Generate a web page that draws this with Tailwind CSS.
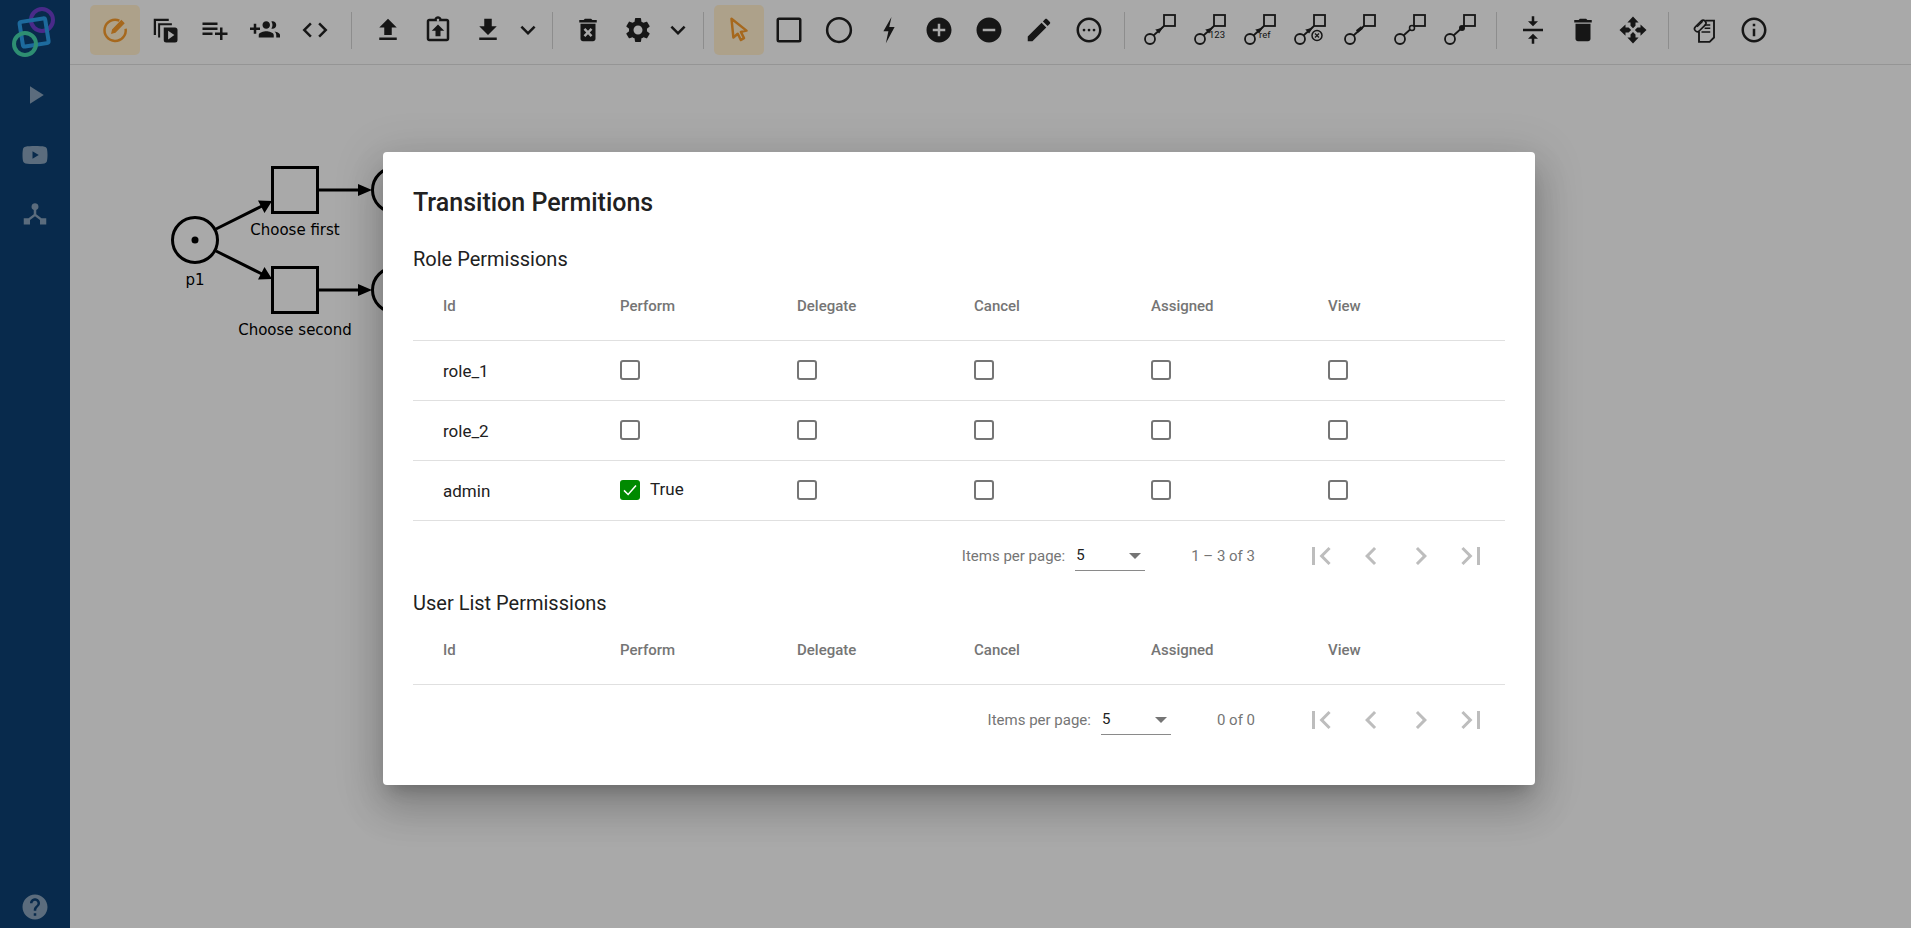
<!DOCTYPE html>
<html lang="en">
<head>
  <meta charset="UTF-8">
  <title>Transition Permitions</title>
  <script src="https://cdn.jsdelivr.net/npm/@tailwindcss/browser@4"></script>
</head>
<body class="bg-[#f9f9f9] font-['Roboto',sans-serif] overflow-hidden">
<div class="relative flex h-[928px] w-[1911px] overflow-hidden">

  <!-- Sidebar -->
  <aside class="flex w-[70px] flex-col items-center bg-[#0c3f70] text-white/50">
    <svg class="h-[70px] w-[70px] shrink-0" viewBox="0 0 70 70" fill="none">
      <circle cx="42" cy="20" r="11" stroke="#6d3ecb" stroke-width="4"/>
      <rect x="21" y="20" width="26" height="25" rx="2" transform="rotate(-9 34 32)" stroke="#2c9de8" stroke-width="4"/>
      <circle cx="25" cy="44" r="11" stroke="#45d2a8" stroke-width="4"/>
    </svg>
    <svg class="mt-[10px] h-[30px] w-[30px]" viewBox="0 0 24 24" fill="currentColor"><path d="M8 5v14l11-7z"/></svg>
    <svg class="mt-[30px] h-[30px] w-[30px]" viewBox="0 0 24 24" fill="currentColor"><path d="M21.6 7.2c-.2-1-1-1.7-2-1.9C18 5 15 4.8 12 4.8s-6 .2-7.6.5c-1 .2-1.8.9-2 1.9C2.200 8.300 2 10 2 12s.2 3.700.4 4.800c.2 1 1 1.700 2 1.900 1.600.3 4.600.5 7.600.5s6-.2 7.600-.5c1-.2 1.800-.9 2-1.900.2-1.100.4-2.800.4-4.800s-.2-3.700-.4-4.800zM10 15V9l5 3z"/></svg>
    <svg class="mt-[30px] h-[30px] w-[30px]" viewBox="0 0 24 24" fill="currentColor"><path d="M12 2.500a2.800 2.800 0 0 0-1 5.400v3.400l-4.200 3.300H3v5h5v-3.600l4-3.100 4 3.100v3.600h5v-5h-3.800L13 11.300V7.900a2.800 2.800 0 0 0-1-5.400z"/></svg>
    <svg class="mt-auto mb-[6px] h-[30px] w-[30px]" viewBox="0 0 24 24" fill="currentColor"><path d="M12 2C6.480 2 2 6.480 2 12s4.480 10 10 10 10-4.480 10-10S17.520 2 12 2zm1 17h-2v-2h2v2zm2.070-7.750l-.9.920C13.450 12.900 13 13.500 13 15h-2v-.5c0-1.100.450-2.100 1.170-2.830l1.240-1.260c.370-.360.590-.860.590-1.410 0-1.100-.9-2-2-2s-2 .9-2 2H8c0-2.210 1.790-4 4-4s4 1.790 4 4c0 .880-.360 1.680-.930 2.250z"/></svg>
  </aside>

  <main class="flex min-w-0 flex-1 flex-col">
    <!-- Toolbar -->
    <div class="flex h-[65px] shrink-0 items-center border-b border-[#dcdcdc] pb-[4px] pl-[20px] text-[#212121]">
      <button class="flex h-[50px] w-[50px] items-center justify-center rounded-[5px] bg-[#ffedcc] text-[#f59a2c]">
        <svg class="h-[30px] w-[30px]" viewBox="0 0 24 24" fill="none" stroke="currentColor" stroke-width="2"><path d="M15.500 4.500A8.500 8.500 0 1 0 20.500 11"/><path d="M9.500 14.500l.6-2.700 7-7.200 2 2-7 7.200z" fill="currentColor" stroke-width="1"/></svg>
      </button>
      <button class="flex h-[50px] w-[50px] items-center justify-center">
        <svg class="h-[30px] w-[30px]" viewBox="0 0 24 24" fill="currentColor"><path d="M3 3h12v1.800H4.800V16H3z"/><path d="M6.500 6.500h11v1.600H8.100V18H6.500z"/><path d="M11 10h9a2 2 0 0 1 2 2v8a2 2 0 0 1-2 2h-7a2 2 0 0 1-2-2zm3.500 2.500v7l5-3.500z" fill-rule="evenodd"/></svg>
      </button>
      <button class="flex h-[50px] w-[50px] items-center justify-center">
        <svg class="h-[30px] w-[30px]" viewBox="0 0 24 24" fill="currentColor"><path d="M14 10H2v2h12v-2zm0-4H2v2h12V6zm4 8v-4h-2v4h-4v2h4v4h2v-4h4v-2h-4zM2 16h8v-2H2v2z"/></svg>
      </button>
      <button class="flex h-[50px] w-[50px] items-center justify-center">
        <svg class="h-[30px] w-[30px]" viewBox="0 0 24 24" fill="currentColor"><path d="M8 10H5V7H3v3H0v2h3v3h2v-3h3v-2zm10 1c1.660 0 2.990-1.340 2.990-3S19.660 5 18 5c-.32 0-.63.05-.91.14.57.81.9 1.790.9 2.860s-.34 2.040-.9 2.860c.28.09.59.14.91.14zm-5 0c1.660 0 2.990-1.340 2.990-3S14.660 5 13 5s-3 1.340-3 3 1.340 3 3 3zm6.620 2.160c.83.73 1.380 1.660 1.380 2.840v2h3v-2c0-1.540-2.370-2.490-4.380-2.840zM13 13c-2 0-6 1-6 3v2h12v-2c0-2-4-3-6-3z"/></svg>
      </button>
      <button class="flex h-[50px] w-[50px] items-center justify-center">
        <svg class="h-[30px] w-[30px]" viewBox="0 0 24 24" fill="currentColor"><path d="M9.400 16.600L4.800 12l4.600-4.600L8 6l-6 6 6 6 1.400-1.400zm5.200 0l4.600-4.600-4.600-4.600L16 6l6 6-6 6-1.400-1.400z"/></svg>
      </button>
      <div class="mx-[11px] h-[37px] w-px shrink-0 bg-[#d0d0d0]"></div>
      <button class="flex h-[50px] w-[50px] items-center justify-center">
        <svg class="h-[30px] w-[30px]" viewBox="0 0 24 24" fill="currentColor"><path d="M9 16h6v-6h4l-7-7-7 7h4zm-4 2h14v2H5z"/></svg>
      </button>
      <button class="flex h-[50px] w-[50px] items-center justify-center">
        <svg class="h-[30px] w-[30px]" viewBox="0 0 24 24" fill="currentColor"><path d="M19 3h-4.180C14.400 1.840 13.300 1 12 1s-2.400.84-2.820 2H5c-1.100 0-2 .9-2 2v14c0 1.100.9 2 2 2h14c1.100 0 2-.9 2-2V5c0-1.100-.9-2-2-2zm-7 0c.55 0 1 .45 1 1s-.45 1-1 1-1-.45-1-1 .45-1 1-1zm7 16H5V5h14v14z"/><path d="M12 7.500l-5 5h3v4.500h4v-4.500h3z"/></svg>
      </button>
      <button class="flex h-[50px] w-[50px] items-center justify-center">
        <svg class="h-[30px] w-[30px]" viewBox="0 0 24 24" fill="currentColor"><path d="M19 9h-4V3H9v6H5l7 7 7-7zM5 18v2h14v-2H5z"/></svg>
      </button>
      <button class="flex h-[50px] w-[30px] items-center justify-center">
        <svg class="h-[30px] w-[30px] shrink-0" viewBox="0 0 24 24" fill="currentColor"><path d="M16.590 8.590L12 13.170 7.410 8.590 6 10l6 6 6-6z"/></svg>
      </button>
      <div class="mr-[10px] ml-[9px] h-[37px] w-px shrink-0 bg-[#d0d0d0]"></div>
      <button class="flex h-[50px] w-[50px] items-center justify-center">
        <svg class="h-[30px] w-[30px]" viewBox="0 0 24 24" fill="currentColor"><path fill-rule="evenodd" d="M6 19c0 1.100.9 2 2 2h8c1.100 0 2-.9 2-2V7H6v12zm2.460-7.120l1.410-1.410L12 12.590l2.120-2.120 1.410 1.410L13.410 14l2.120 2.120-1.410 1.410L12 15.410l-2.120 2.120-1.410-1.410L10.590 14l-2.130-2.120zM15.500 4l-1-1h-5l-1 1H5v2h14V4z"/></svg>
      </button>
      <button class="flex h-[50px] w-[50px] items-center justify-center">
        <svg class="h-[30px] w-[30px]" viewBox="0 0 24 24" fill="currentColor"><path d="M19.140 12.940c.04-.3.06-.61.06-.94 0-.32-.02-.64-.07-.94l2.030-1.580c.18-.14.23-.41.12-.61l-1.920-3.320c-.12-.22-.37-.29-.59-.22l-2.390.96c-.5-.38-1.030-.7-1.620-.94l-.36-2.540c-.04-.24-.24-.41-.48-.41h-3.840c-.24 0-.43.17-.47.41l-.36 2.540c-.59.24-1.130.57-1.620.94l-2.390-.96c-.22-.08-.47 0-.59.22L2.740 8.870c-.12.21-.08.47.12.61l2.030 1.580c-.05.3-.09.63-.09.94s.02.64.07.94l-2.030 1.580c-.18.14-.23.41-.12.61l1.920 3.320c.12.22.37.29.59.22l2.390-.96c.5.38 1.030.7 1.620.94l.36 2.540c.05.24.24.41.48.41h3.840c.24 0 .44-.17.47-.41l.36-2.540c.59-.24 1.130-.56 1.620-.94l2.390.96c.22.08.47 0 .59-.22l1.920-3.320c.12-.22.07-.47-.12-.61l-2.010-1.580zM12 15.600c-1.980 0-3.600-1.620-3.600-3.600s1.620-3.600 3.600-3.600 3.600 1.620 3.600 3.600-1.620 3.600-3.600 3.600z"/></svg>
      </button>
      <button class="flex h-[50px] w-[30px] items-center justify-center">
        <svg class="h-[30px] w-[30px] shrink-0" viewBox="0 0 24 24" fill="currentColor"><path d="M16.590 8.590L12 13.170 7.410 8.590 6 10l6 6 6-6z"/></svg>
      </button>
      <div class="mx-[10px] h-[37px] w-px shrink-0 bg-[#d0d0d0]"></div>
      <button class="flex h-[50px] w-[50px] items-center justify-center rounded-[5px] bg-[#ffedcc] text-[#f59a2c]">
        <svg class="h-[30px] w-[30px]" viewBox="0 0 24 24" fill="none" stroke="currentColor" stroke-width="2" stroke-linejoin="round"><path d="M6 3l12 9.500-4.500 1 2.500 5-2.500 1.500-2.500-5-3.500 3z"/></svg>
      </button>
      <button class="flex h-[50px] w-[50px] items-center justify-center">
        <svg class="h-[30px] w-[30px]" viewBox="0 0 24 24" fill="none" stroke="currentColor" stroke-width="2"><rect x="3" y="3" width="18" height="18" rx="1"/></svg>
      </button>
      <button class="flex h-[50px] w-[50px] items-center justify-center">
        <svg class="h-[30px] w-[30px]" viewBox="0 0 24 24" fill="none" stroke="currentColor" stroke-width="2"><circle cx="12" cy="12" r="9.500"/></svg>
      </button>
      <button class="flex h-[50px] w-[50px] items-center justify-center">
        <svg class="h-[30px] w-[30px]" viewBox="0 0 24 24" fill="currentColor"><path d="M14 1.500L7.500 13h4l-2 9.500 7-13h-4.300z"/></svg>
      </button>
      <button class="flex h-[50px] w-[50px] items-center justify-center">
        <svg class="h-[30px] w-[30px]" viewBox="0 0 24 24" fill="currentColor"><path d="M12 2C6.480 2 2 6.480 2 12s4.480 10 10 10 10-4.480 10-10S17.520 2 12 2zm5 11h-4v4h-2v-4H7v-2h4V7h2v4h4v2z"/></svg>
      </button>
      <button class="flex h-[50px] w-[50px] items-center justify-center">
        <svg class="h-[30px] w-[30px]" viewBox="0 0 24 24" fill="currentColor"><path d="M12 2C6.480 2 2 6.480 2 12s4.480 10 10 10 10-4.480 10-10S17.520 2 12 2zm5 11H7v-2h10v2z"/></svg>
      </button>
      <button class="flex h-[50px] w-[50px] items-center justify-center">
        <svg class="h-[30px] w-[30px]" viewBox="0 0 24 24" fill="currentColor"><path d="M3 17.250V21h3.750L17.810 9.940l-3.750-3.750L3 17.250zM20.710 7.040c.39-.39.39-1.020 0-1.410l-2.340-2.340c-.39-.39-1.020-.39-1.410 0l-1.830 1.830 3.750 3.750 1.830-1.830z"/></svg>
      </button>
      <button class="flex h-[50px] w-[50px] items-center justify-center">
        <svg class="h-[30px] w-[30px]" viewBox="0 0 24 24" fill="currentColor"><path d="M12 2C6.480 2 2 6.480 2 12s4.480 10 10 10 10-4.480 10-10S17.520 2 12 2zm0 18c-4.410 0-8-3.590-8-8s3.590-8 8-8 8 3.590 8 8-3.590 8-8 8z"/><circle cx="8" cy="12" r="1.100"/><circle cx="12" cy="12" r="1.100"/><circle cx="16" cy="12" r="1.100"/></svg>
      </button>
      <div class="mx-[10px] h-[37px] w-px shrink-0 bg-[#d0d0d0]"></div>
      <button class="flex h-[50px] w-[50px] items-center justify-center">
        <svg class="h-[40px] w-[40px]" viewBox="0 0 40 40" fill="none" stroke="currentColor" stroke-width="1.800"><circle cx="10" cy="29" r="5"/><rect x="24" y="5" width="11" height="11"/><path d="M13.500 25.500L24 16"/><path d="M17 20l4-1-2 3z" fill="currentColor"/></svg>
      </button>
      <button class="flex h-[50px] w-[50px] items-center justify-center">
        <svg class="h-[40px] w-[40px]" viewBox="0 0 40 40" fill="none" stroke="currentColor" stroke-width="1.800"><circle cx="10" cy="29" r="5"/><rect x="24" y="5" width="11" height="11"/><path d="M13.500 25.500L24 16"/><path d="M17 20l4-1-2 3z" fill="currentColor"/><text x="19" y="28" stroke="none" fill="currentColor" font-size="9.500" font-family="Roboto">123</text></svg>
      </button>
      <button class="flex h-[50px] w-[50px] items-center justify-center">
        <svg class="h-[40px] w-[40px]" viewBox="0 0 40 40" fill="none" stroke="currentColor" stroke-width="1.800"><circle cx="10" cy="29" r="5"/><rect x="24" y="5" width="11" height="11"/><path d="M13.500 25.500L24 16"/><path d="M17 20l4-1-2 3z" fill="currentColor"/><text x="19" y="28" stroke="none" fill="currentColor" font-size="9.500" font-family="Roboto">ref</text></svg>
      </button>
      <button class="flex h-[50px] w-[50px] items-center justify-center">
        <svg class="h-[40px] w-[40px]" viewBox="0 0 40 40" fill="none" stroke="currentColor" stroke-width="1.800"><circle cx="10" cy="29" r="5"/><rect x="24" y="5" width="11" height="11"/><path d="M13.500 25.500L24 16"/><path d="M17 20l4-1-2 3z" fill="currentColor"/><circle cx="27" cy="25.500" r="5" stroke-width="1.500"/><path d="M25 23.500l4 4m0-4l-4 4" stroke-width="1.200"/></svg>
      </button>
      <button class="flex h-[50px] w-[50px] items-center justify-center">
        <svg class="h-[40px] w-[40px]" viewBox="0 0 40 40" fill="none" stroke="currentColor" stroke-width="1.800"><circle cx="10" cy="29" r="5"/><rect x="24" y="5" width="11" height="11"/><path d="M13.500 25.500L24 16"/><path d="M17 21.500L22 17.500" stroke-width="3.500"/></svg>
      </button>
      <button class="flex h-[50px] w-[50px] items-center justify-center">
        <svg class="h-[40px] w-[40px]" viewBox="0 0 40 40" fill="none" stroke="currentColor" stroke-width="1.800"><circle cx="10" cy="29" r="5"/><rect x="24" y="5" width="11" height="11"/><path d="M13.500 25.500L24 16"/><circle cx="22" cy="18" r="2.500" fill="#f9f9f9" stroke-width="1.500"/></svg>
      </button>
      <button class="flex h-[50px] w-[50px] items-center justify-center">
        <svg class="h-[40px] w-[40px]" viewBox="0 0 40 40" fill="none" stroke="currentColor" stroke-width="1.800"><circle cx="10" cy="29" r="5"/><rect x="24" y="5" width="11" height="11"/><path d="M13.500 25.500L24 16"/><circle cx="22" cy="18" r="3" fill="currentColor" stroke="none"/></svg>
      </button>
      <div class="mx-[11px] h-[37px] w-px shrink-0 bg-[#d0d0d0]"></div>
      <button class="flex h-[50px] w-[50px] items-center justify-center">
        <svg class="h-[30px] w-[30px]" viewBox="0 0 24 24" fill="currentColor"><path d="M8 19h3v4h2v-4h3l-4-4-4 4zm8-14h-3V1h-2v4H8l4 4 4-4zM4 11v2h16v-2H4z"/></svg>
      </button>
      <button class="flex h-[50px] w-[50px] items-center justify-center">
        <svg class="h-[30px] w-[30px]" viewBox="0 0 24 24" fill="currentColor"><path d="M6 19c0 1.100.9 2 2 2h8c1.100 0 2-.9 2-2V7H6v12zM19 4h-3.500l-1-1h-5l-1 1H5v2h14V4z"/></svg>
      </button>
      <button class="flex h-[50px] w-[50px] items-center justify-center">
        <svg class="h-[30px] w-[30px]" viewBox="0 0 24 24" fill="currentColor">
          <path id="move-arm" d="M12 1.200L16.500 6H14v2.500l-2 2-2-2V6H7.500z"/>
          <path d="M12 1.200L16.500 6H14v2.500l-2 2-2-2V6H7.500z" transform="rotate(90 12 12)"/>
          <path d="M12 1.200L16.500 6H14v2.500l-2 2-2-2V6H7.500z" transform="rotate(180 12 12)"/>
          <path d="M12 1.200L16.500 6H14v2.500l-2 2-2-2V6H7.500z" transform="rotate(270 12 12)"/>
        </svg>
      </button>
      <div class="mx-[10px] h-[37px] w-px shrink-0 bg-[#d0d0d0]"></div>
      <button class="flex h-[50px] w-[50px] items-center justify-center">
        <svg class="h-[30px] w-[30px]" viewBox="0 0 24 24" fill="none" stroke="currentColor" stroke-width="1.500">
          <path d="M13 4.500h7V18l-3.500 3.500H8V13"/>
          <path d="M12.500 8H17M12.500 10.500H17M10 13.500h7" stroke-width="1.200"/>
          <rect x="3.500" y="6.500" width="11" height="4.500" rx="2.250" transform="rotate(-45 9 8.750)" stroke-width="1.300"/>
          <path d="M6.500 9.500L11 5" stroke-width="1"/>
        </svg>
      </button>
      <button class="flex h-[50px] w-[50px] items-center justify-center">
        <svg class="h-[30px] w-[30px]" viewBox="0 0 24 24" fill="currentColor"><path d="M11 7h2v2h-2zm0 4h2v6h-2zm1-9C6.480 2 2 6.480 2 12s4.480 10 10 10 10-4.480 10-10S17.520 2 12 2zm0 18c-4.410 0-8-3.590-8-8s3.590-8 8-8 8 3.590 8 8-3.590 8-8 8z"/></svg>
      </button>
    </div>

    <!-- Net canvas -->
    <div class="relative flex-1">
      <svg class="absolute top-[-65px] left-[-70px] h-[928px] w-[1911px]" viewBox="0 0 1911 928" fill="none" stroke="#000" stroke-width="3">
        <circle cx="195" cy="240" r="22.500"/>
        <circle cx="195" cy="240" r="3.500" fill="#000" stroke="none"/>
        <rect x="272.500" y="167.500" width="45" height="45"/>
        <rect x="272.500" y="267.500" width="45" height="45"/>
        <circle cx="395" cy="190" r="22.500"/>
        <circle cx="395" cy="290" r="22.500"/>
        <path d="M216 229L262 206M216 251L262 274M318 190H360M318 290H360"/>
        <path d="M272 201L258 200.500 264.500 213zM272 279L258 279.500 264.500 267zM372 190L358 184V196zM372 290L358 284V296z" fill="#000" stroke="none"/>
        <g fill="#000" stroke="none" font-family="'DejaVu Sans',sans-serif" font-size="15" text-anchor="middle">
          <text x="195" y="285">p1</text>
          <text x="295" y="235">Choose first</text>
          <text x="295" y="335">Choose second</text>
        </g>
      </svg>
    </div>
  </main>

  <!-- Dialog backdrop -->
  <div class="absolute inset-0 bg-black/32"></div>

  <!-- Dialog -->
  <div class="absolute top-[152px] left-[383px] h-[633px] w-[1152px] rounded-[4px] bg-white px-[30px] pt-[30px] shadow-[0_11px_15px_-7px_rgba(0,0,0,.2),0_24px_38px_3px_rgba(0,0,0,.14),0_9px_46px_8px_rgba(0,0,0,.12)]">
    <h2 class="flex h-[42px] items-center text-[25px] font-medium text-[#212121]">Transition Permitions</h2>

    <h3 class="mt-[25px] flex h-[20px] items-center text-[20px] text-[#212121]">Role Permissions</h3>
    <div class="grid h-[72px] grid-cols-6 items-center border-b border-[#e0e0e0] pt-[3px] pl-[30px] text-[15px] font-medium text-[#757575]">
      <div>Id</div><div>Perform</div><div>Delegate</div><div>Cancel</div><div>Assigned</div><div>View</div>
    </div>
    <div class="grid h-[60px] grid-cols-6 items-center border-b border-[#e0e0e0] pb-[1px] pl-[30px] text-[17px] text-[#212121]">
      <div class="pt-[3px]">role_1</div>
      <div class="h-[20px] w-[20px] rounded-[3px] border-2 border-[#757575]"></div>
      <div class="h-[20px] w-[20px] rounded-[3px] border-2 border-[#757575]"></div>
      <div class="h-[20px] w-[20px] rounded-[3px] border-2 border-[#757575]"></div>
      <div class="h-[20px] w-[20px] rounded-[3px] border-2 border-[#757575]"></div>
      <div class="h-[20px] w-[20px] rounded-[3px] border-2 border-[#757575]"></div>
    </div>
    <div class="grid h-[60px] grid-cols-6 items-center border-b border-[#e0e0e0] pb-[1px] pl-[30px] text-[17px] text-[#212121]">
      <div class="pt-[3px]">role_2</div>
      <div class="h-[20px] w-[20px] rounded-[3px] border-2 border-[#757575]"></div>
      <div class="h-[20px] w-[20px] rounded-[3px] border-2 border-[#757575]"></div>
      <div class="h-[20px] w-[20px] rounded-[3px] border-2 border-[#757575]"></div>
      <div class="h-[20px] w-[20px] rounded-[3px] border-2 border-[#757575]"></div>
      <div class="h-[20px] w-[20px] rounded-[3px] border-2 border-[#757575]"></div>
    </div>
    <div class="grid h-[60px] grid-cols-6 items-center border-b border-[#e0e0e0] pb-[1px] pl-[30px] text-[17px] text-[#212121]">
      <div class="pt-[3px]">admin</div>
      <div class="flex items-center gap-[10px]">
        <span class="flex h-[20px] w-[20px] items-center justify-center rounded-[3px] bg-[#008a00]">
          <svg class="h-[18px] w-[18px]" viewBox="0 0 24 24" fill="none" stroke="#fff" stroke-width="2"><path d="M4 12.500l5.500 5.500L20 6"/></svg>
        </span>
        <span>True</span>
      </div>
      <div class="h-[20px] w-[20px] rounded-[3px] border-2 border-[#757575]"></div>
      <div class="h-[20px] w-[20px] rounded-[3px] border-2 border-[#757575]"></div>
      <div class="h-[20px] w-[20px] rounded-[3px] border-2 border-[#757575]"></div>
      <div class="h-[20px] w-[20px] rounded-[3px] border-2 border-[#757575]"></div>
    </div>
    <div class="flex h-[70px] items-center justify-end pr-[9px] text-[15px] text-[#757575]">
      <span>Items per page:</span>
      <div class="relative mr-[46px] ml-[10px] flex h-[30px] w-[70px] items-center border-b border-[#8a8a8a] text-[#212121]">
        <span class="pl-[1px]">5</span>
        <span class="absolute top-[12px] right-[4px] h-0 w-0 border-x-[6px] border-t-[6px] border-x-transparent border-t-[#757575]"></span>
      </div>
      <span>1 – 3 of 3</span>
      <div class="ml-[41px] flex text-[#bdbdbd]">
        <svg class="mx-[7px] h-[36px] w-[36px]" viewBox="0 0 24 24" fill="currentColor"><path d="M18.410 16.590L13.820 12l4.590-4.590L17 6l-6 6 6 6zM6 6h2v12H6z"/></svg>
        <svg class="mx-[7px] h-[36px] w-[36px]" viewBox="0 0 24 24" fill="currentColor"><path d="M15.410 7.410L14 6l-6 6 6 6 1.410-1.410L10.830 12z"/></svg>
        <svg class="mx-[7px] h-[36px] w-[36px]" viewBox="0 0 24 24" fill="currentColor"><path d="M10 6L8.590 7.410 13.170 12l-4.580 4.590L10 18l6-6z"/></svg>
        <svg class="mx-[7px] h-[36px] w-[36px]" viewBox="0 0 24 24" fill="currentColor"><path d="M5.590 7.410L10.180 12l-4.590 4.590L7 18l6-6-6-6zM16 6h2v12h-2z"/></svg>
      </div>
    </div>

    <h3 class="mt-[2px] flex h-[20px] items-center text-[20px] text-[#212121]">User List Permissions</h3>
    <div class="grid h-[72px] grid-cols-6 items-center border-b border-[#e0e0e0] pt-[3px] pl-[30px] text-[15px] font-medium text-[#757575]">
      <div>Id</div><div>Perform</div><div>Delegate</div><div>Cancel</div><div>Assigned</div><div>View</div>
    </div>
    <div class="flex h-[70px] items-center justify-end pr-[9px] text-[15px] text-[#757575]">
      <span>Items per page:</span>
      <div class="relative mr-[46px] ml-[10px] flex h-[30px] w-[70px] items-center border-b border-[#8a8a8a] text-[#212121]">
        <span class="pl-[1px]">5</span>
        <span class="absolute top-[12px] right-[4px] h-0 w-0 border-x-[6px] border-t-[6px] border-x-transparent border-t-[#757575]"></span>
      </div>
      <span>0 of 0</span>
      <div class="ml-[41px] flex text-[#bdbdbd]">
        <svg class="mx-[7px] h-[36px] w-[36px]" viewBox="0 0 24 24" fill="currentColor"><path d="M18.410 16.590L13.820 12l4.590-4.590L17 6l-6 6 6 6zM6 6h2v12H6z"/></svg>
        <svg class="mx-[7px] h-[36px] w-[36px]" viewBox="0 0 24 24" fill="currentColor"><path d="M15.410 7.410L14 6l-6 6 6 6 1.410-1.410L10.830 12z"/></svg>
        <svg class="mx-[7px] h-[36px] w-[36px]" viewBox="0 0 24 24" fill="currentColor"><path d="M10 6L8.590 7.410 13.170 12l-4.580 4.590L10 18l6-6z"/></svg>
        <svg class="mx-[7px] h-[36px] w-[36px]" viewBox="0 0 24 24" fill="currentColor"><path d="M5.590 7.410L10.180 12l-4.590 4.590L7 18l6-6-6-6zM16 6h2v12h-2z"/></svg>
      </div>
    </div>
  </div>
</div>
</body>
</html>
